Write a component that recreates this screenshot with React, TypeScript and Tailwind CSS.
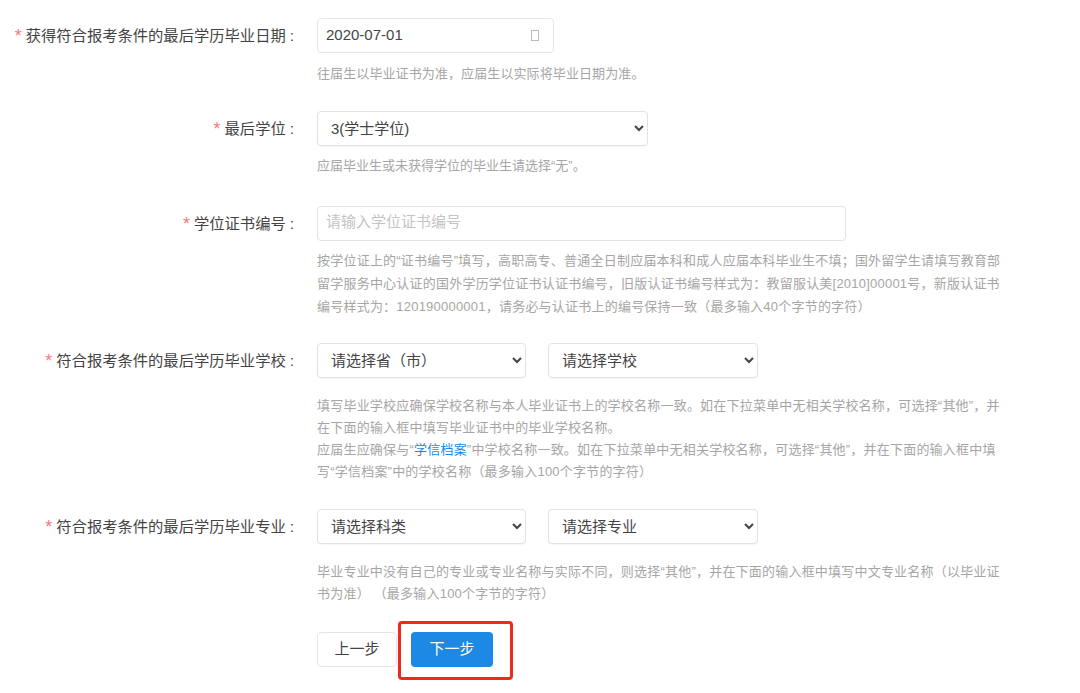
const font = "font-['Liberation_Sans','Noto_Sans_CJK_SC',sans-serif]";

function Label({ text }: { text: string }) {
  return (
    <label className="w-[295px] shrink-0 h-[35px] pt-[2px] flex items-center justify-end text-[15.3px] text-[#444]">
      <span className="text-[#f47c7c] text-[18px] mr-[4px]">*</span>
      {text}
      <span className="ml-1 mr-[1px]">:</span>
    </label>
  );
}

function Pick({ value, width }: { value: string; width: string }) {
  return (
    <select
      defaultValue={value}
      className={`${width} h-[35px] rounded border border-[#e2e2e2] bg-white pl-[9px] text-[15px] text-[#444] shadow-[0_1px_1px_rgba(0,0,0,0.04)]`}
    >
      <option>{value}</option>
    </select>
  );
}

function Hint({ children, className }: { children: React.ReactNode; className: string }) {
  return <div className={`ml-[317px] w-[700px] whitespace-nowrap text-[13px] text-[#a6a6a6] ${className}`}>{children}</div>;
}

export default function App() {
  return (
    <div className={`${font} w-[1080px] h-[693px] overflow-hidden bg-white pt-[18px]`}>
      {/* 毕业日期 */}
      <div className="flex gap-[22px]">
        <Label text="获得符合报考条件的最后学历毕业日期" />
        <div className="w-[237px] h-[35px] flex items-center justify-between rounded border border-[#e6e6e6] pl-2 pr-[14px] text-[15px] text-[#444]">
          <span>2020-07-01</span>
          <span className="w-2 h-[11px] border border-[#bbb]" />
        </div>
      </div>
      <Hint className="mt-[10px] leading-[22px] tracking-[0.1px]">往届生以毕业证书为准，应届生以实际将毕业日期为准。</Hint>

      {/* 最后学位 */}
      <div className="flex gap-[22px] mt-[26px]">
        <Label text="最后学位" />
        <Pick value="3(学士学位)" width="w-[331px]" />
      </div>
      <Hint className="mt-[9px] leading-[22px]">应届毕业生或未获得学位的毕业生请选择“无”。</Hint>

      {/* 学位证书编号 */}
      <div className="flex gap-[22px] mt-[29px]">
        <Label text="学位证书编号" />
        <input
          placeholder="请输入学位证书编号"
          className="w-[529px] h-[35px] rounded border border-[#e2e2e2] pl-2 pb-1 text-[15px] placeholder:text-[#c4c4c4] outline-none"
        />
      </div>
      <Hint className="mt-[8px] leading-[23px] tracking-[0.22px]">
        按学位证上的“证书编号”填写，高职高专、普通全日制应届本科和成人应届本科毕业生不填；国外留学生请填写教育部
        <br />
        留学服务中心认证的国外学历学位证书认证书编号，旧版认证书编号样式为：教留服认美[2010]00001号，新版认证书
        <br />
        编号样式为：120190000001，请务必与认证书上的编号保持一致（最多输入40个字节的字符）
      </Hint>

      {/* 毕业学校 */}
      <div className="flex gap-[22px] mt-[25px]">
        <Label text="符合报考条件的最后学历毕业学校" />
        <div className="flex gap-[22px]">
          <Pick value="请选择省（市）" width="w-[209px]" />
          <Pick value="请选择学校" width="w-[210px]" />
        </div>
      </div>
      <Hint className="mt-[17px] leading-[22px] tracking-[0.21px]">
        填写毕业学校应确保学校名称与本人毕业证书上的学校名称一致。如在下拉菜单中无相关学校名称，可选择“其他”，并
        <br />
        在下面的输入框中填写毕业证书中的毕业学校名称。
        <br />
        应届生应确保与“<span className="text-[#1e88e5]">学信档案</span>”中学校名称一致。如在下拉菜单中无相关学校名称，可选择“其他”，并在下面的输入框中填
        <br />
        写“学信档案”中的学校名称（最多输入100个字节的字符）
      </Hint>

      {/* 毕业专业 */}
      <div className="flex gap-[22px] mt-[26px]">
        <Label text="符合报考条件的最后学历毕业专业" />
        <div className="flex gap-[22px]">
          <Pick value="请选择科类" width="w-[209px]" />
          <Pick value="请选择专业" width="w-[210px]" />
        </div>
      </div>
      <Hint className="mt-[17px] leading-[22px] tracking-[0.21px]">
        毕业专业中没有自己的专业或专业名称与实际不同，则选择“其他”，并在下面的输入框中填写中文专业名称（以毕业证
        <br />
        书为准） （最多输入100个字节的字符）
      </Hint>

      {/* 按钮 */}
      <div className="ml-[317px] mt-[27px] flex items-start gap-[14px]">
        <button className="w-[80px] h-[35px] rounded border border-[#e6e6e6] bg-white text-[15px] text-[#444]">上一步</button>
        <div className="relative h-[35px]">
          <button className="w-[82px] h-[35px] rounded bg-[#1e88e5] text-[15px] text-white">下一步</button>
          <div className="absolute -left-[13px] -right-[20px] -top-[11px] -bottom-[13px] rounded border-[3px] border-[#ee2a1f]" />
        </div>
      </div>
    </div>
  );
}
